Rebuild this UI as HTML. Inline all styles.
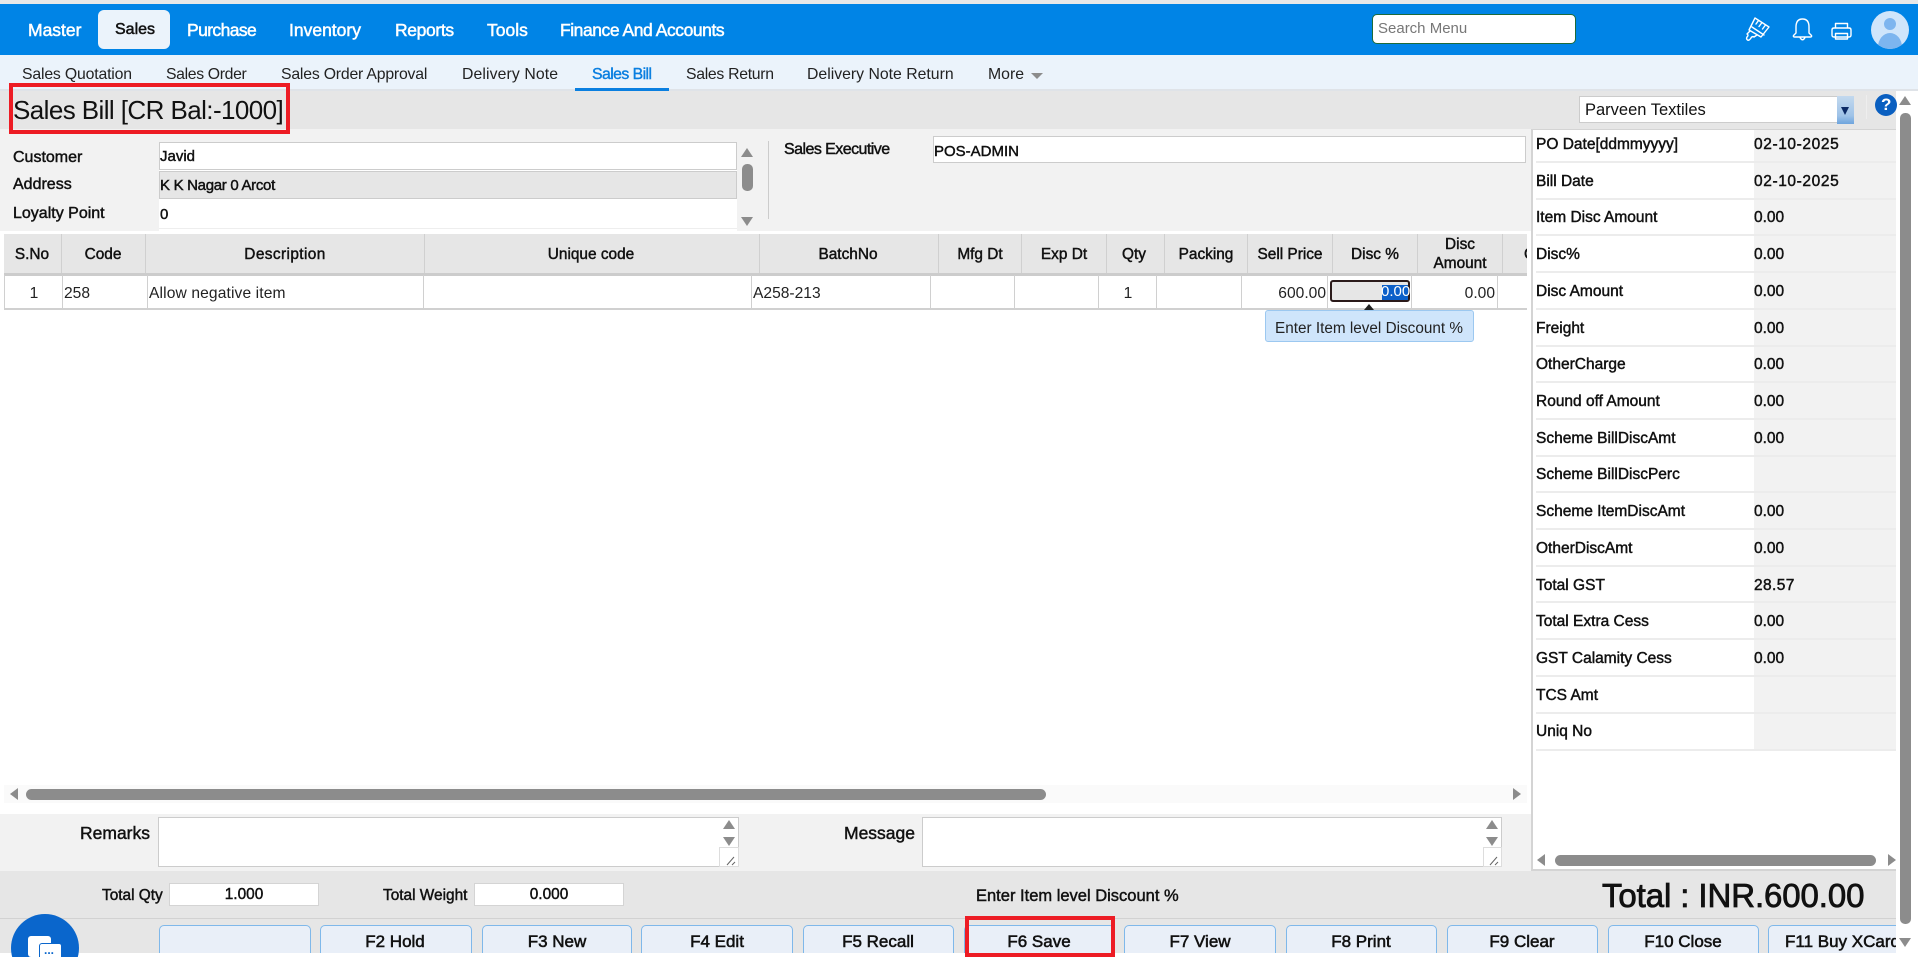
<!DOCTYPE html>
<html><head><meta charset="utf-8"><title>Sales Bill</title>
<style>
html,body{margin:0;padding:0;width:1918px;height:957px;overflow:hidden;background:#fff}
body{position:relative;font-family:"Liberation Sans",sans-serif;color:#111}
.b{position:absolute;box-sizing:border-box}
.t{position:absolute;white-space:nowrap;line-height:20px;font-size:16px}
.m{-webkit-text-stroke:.45px currentColor}
.c{transform:translateX(-50%)}
.r{transform:translateX(-100%)}
.n{color:#fff;font-size:17.5px;top:20px;-webkit-text-stroke:.5px #fff}
.s{font-size:15.8px;top:65px;color:#222}
.h{top:245px;font-size:15.4px;-webkit-text-stroke:.45px #111}
.d{top:284px;font-size:15.6px;color:#222}
.vh,.vr{position:absolute;width:1px;background:#d0d0d0}
.vh{top:234px;height:39px}.vr{top:275px;height:33px}
.l{left:1536px;font-size:15.5px;-webkit-text-stroke:.45px #111}
.v{left:1754px;font-size:15.5px;-webkit-text-stroke:.45px #111}
.rl{position:absolute;left:1536px;width:360px;height:2px;background:#ececec}
.btn{position:absolute;top:925px;height:40px;border:1px solid #7fb8ea;border-radius:5px 5px 0 0;background:#e9eff8;box-sizing:border-box}
.bt{top:932px;font-size:17px;-webkit-text-stroke:.55px #111}
.up,.dn,.lf,.rt{position:absolute;width:0;height:0}
.up{border-left:6px solid transparent;border-right:6px solid transparent;border-bottom:9px solid #8c8c8c}
.dn{border-left:6px solid transparent;border-right:6px solid transparent;border-top:9px solid #8c8c8c}
.lf{border-top:6px solid transparent;border-bottom:6px solid transparent;border-right:8px solid #8c8c8c}
.rt{border-top:6px solid transparent;border-bottom:6px solid transparent;border-left:8px solid #8c8c8c}
.red{position:absolute;box-sizing:border-box;border:4px solid #ed1c24}
</style></head><body>

<div class="b" style="left:0;top:0;width:1918px;height:4px;background:#e8e8e8"></div>
<div class="b" style="left:0;top:4px;width:1918px;height:51px;background:#0084e6"></div>
<div class="b" style="left:98px;top:10px;width:72px;height:39px;background:#ebf3fb;border-radius:6px"></div>
<span class="t n" style="left:28px">Master</span>
<span class="t n" style="left:115px;color:#111;-webkit-text-stroke:.5px #111;font-size:16px">Sales</span>
<span class="t n" style="left:187px;letter-spacing:-.6px">Purchase</span>
<span class="t n" style="left:289px">Inventory</span>
<span class="t n" style="left:395px;letter-spacing:-.35px">Reports</span>
<span class="t n" style="left:487px">Tools</span>
<span class="t n" style="left:560px;letter-spacing:-.45px">Finance And Accounts</span>

<div class="b" style="left:1372px;top:14px;width:204px;height:30px;background:#fff;border:1px solid #1d6b3a;border-radius:5px"></div>
<span class="t" style="left:1378px;top:19px;font-size:15px;color:#777">Search Menu</span>

<svg style="position:absolute;left:1740px;top:10px" width="120" height="40" fill="none" stroke="#fff" stroke-width="1.4" stroke-linejoin="round" stroke-linecap="round">
<path d="M15 8 L29 17 L21 27 L9 20 Z M18.5 10.5 L16 14 M22 12.5 L19 16.5 M25.5 15 L22.5 19 M12 17 L24 25"/>
<path d="M10 21 L7 24 Q9 25 7 27 Q6 29 7.5 30 Q9 31 11 28 Q12 26 14 27 L17 25"/>
<path d="M62.5 9 Q56 9 56 17 L56 23 L53.5 25.5 Q53 27 54.5 27 L70.5 27 Q72 27 71.5 25.5 L69 23 L69 17 Q69 9 62.5 9 Z M60 27.5 Q62.5 32 65 27.5"/>
<path d="M95.5 18 L95.5 13.5 L107.5 13.5 L107.5 18 M92 20 Q92 18 94 18 L109 18 Q111 18 111 20 L111 25 Q111 27 109 27 L94 27 Q92 27 92 25 Z M95.5 23.5 L107.5 23.5 L107.5 29 L95.5 29 Z"/>
</svg>
<div class="b" style="left:1871px;top:11px;width:38px;height:38px;border-radius:50%;background:#cfe5fb;overflow:hidden">
 <div class="b" style="left:13px;top:7px;width:12px;height:12px;border-radius:50%;background:#7db5ef"></div>
 <div class="b" style="left:7px;top:22px;width:24px;height:28px;border-radius:50%;background:#7db5ef"></div>
</div>

<div class="b" style="left:0;top:55px;width:1918px;height:34px;background:#ebf3fb"></div>
<div class="b" style="left:0;top:89px;width:1918px;height:2px;background:#dfe3e8"></div>
<span class="t s" style="left:22px;letter-spacing:-.17px">Sales Quotation</span>
<span class="t s" style="left:166px;letter-spacing:-.35px">Sales Order</span>
<span class="t s" style="left:281px;letter-spacing:-.2px">Sales Order Approval</span>
<span class="t s" style="left:462px;letter-spacing:.1px">Delivery Note</span>
<span class="t s m" style="left:592px;color:#0a7fe0;-webkit-text-stroke:.4px #0a7fe0;letter-spacing:-.55px">Sales Bill</span>
<div class="b" style="left:575px;top:88px;width:94px;height:3px;background:#0a7fe0"></div>
<span class="t s" style="left:686px;letter-spacing:-.3px">Sales Return</span>
<span class="t s" style="left:807px;">Delivery Note Return</span>
<span class="t s" style="left:988px">More</span>
<div class="b" style="left:1031px;top:73px;width:0;height:0;border-left:6px solid transparent;border-right:6px solid transparent;border-top:6px solid #8c8c8c"></div>

<div class="b" style="left:0;top:91px;width:1896px;height:38px;background:#e6e6e6"></div>
<span class="t" style="left:13px;top:100px;font-size:26px;letter-spacing:-.58px;color:#111">Sales Bill [CR Bal:-1000]</span>

<div class="b" style="left:1579px;top:96px;width:275px;height:27px;background:#fff;border:1px solid #ccc"></div>
<span class="t" style="left:1585px;top:100px;font-size:16.5px">Parveen Textiles</span>
<div class="b" style="left:1837px;top:96px;width:17px;height:28px;background:linear-gradient(#c3d9ee,#9fc3e8 70%,#6ea4dd)"></div>
<div class="b" style="left:1841px;top:107px;width:0;height:0;border-left:4.5px solid transparent;border-right:4.5px solid transparent;border-top:8px solid #0b2a66"></div>
<div class="b" style="left:1866px;top:95px;width:1px;height:24px;background:#eee"></div>
<div class="b" style="left:1875px;top:94px;width:22px;height:22px;border-radius:50%;background:#0a5fc0"></div>
<span class="t" style="left:1881px;top:95px;font-size:17px;font-weight:bold;color:#fff">?</span>

<div class="b" style="left:0;top:129px;width:1531px;height:102px;background:#f2f2f2"></div>
<span class="t m" style="left:13px;top:148px">Customer</span>
<span class="t m" style="left:13px;top:175px">Address</span>
<span class="t m" style="left:13px;top:204px">Loyalty Point</span>
<div class="b" style="left:159px;top:142px;width:578px;height:89px;background:#fff"></div>
<div class="b" style="left:159px;top:142px;width:578px;height:28px;background:#fff;border:1px solid #ccc"></div>
<div class="b" style="left:159px;top:171px;width:578px;height:28px;background:#e6e6e6;border:1px solid #ccc"></div>
<div class="b" style="left:159px;top:228px;width:578px;height:1px;background:#eee"></div>
<span class="t m" style="left:160px;top:147px;font-size:15px">Javid</span>
<span class="t m" style="left:160px;top:176px;font-size:15px;letter-spacing:-.3px">K K Nagar 0 Arcot</span>
<span class="t m" style="left:160px;top:205px;font-size:15px">0</span>
<div class="up" style="left:741px;top:148px"></div>
<div class="b" style="left:742px;top:164px;width:11px;height:27px;background:#8c8c8c;border-radius:5px"></div>
<div class="dn" style="left:741px;top:217px"></div>
<div class="b" style="left:768px;top:141px;width:1px;height:78px;background:#ccc"></div>
<span class="t m" style="left:784px;top:140px;letter-spacing:-.55px">Sales Executive</span>
<div class="b" style="left:933px;top:136px;width:593px;height:27px;background:#fff;border:1px solid #ccc"></div>
<span class="t m" style="left:934px;top:142px;font-size:15px">POS-ADMIN</span>

<div class="b" style="left:4px;top:234px;width:1523px;height:39px;background:#e6e6e6"></div>
<div class="b" style="left:4px;top:273px;width:1523px;height:3px;background:#ccc"></div>
<div class="vh" style="left:61px"></div><div class="vh" style="left:145px"></div><div class="vh" style="left:424px"></div><div class="vh" style="left:759px"></div><div class="vh" style="left:938px"></div><div class="vh" style="left:1021px"></div><div class="vh" style="left:1106px"></div><div class="vh" style="left:1164px"></div><div class="vh" style="left:1247px"></div><div class="vh" style="left:1332px"></div><div class="vh" style="left:1417px"></div><div class="vh" style="left:1502px"></div>
<span class="t h c" style="left:32px">S.No</span>
<span class="t h c" style="left:103px">Code</span>
<span class="t h c" style="left:285px;letter-spacing:.4px">Description</span>
<span class="t h c" style="left:591px">Unique code</span>
<span class="t h c" style="left:848px">BatchNo</span>
<span class="t h c" style="left:980px">Mfg Dt</span>
<span class="t h c" style="left:1064px">Exp Dt</span>
<span class="t h c" style="left:1134px">Qty</span>
<span class="t h c" style="left:1206px">Packing</span>
<span class="t h c" style="left:1290px">Sell Price</span>
<span class="t h c" style="left:1375px">Disc %</span>
<span class="t h c" style="left:1460px;top:235px">Disc</span>
<span class="t h c" style="left:1460px;top:254px">Amount</span>
<div class="b" style="left:1524px;top:245px;width:3px;height:20px;overflow:hidden"><span class="t h" style="left:0;top:0">C</span></div>

<div class="b" style="left:4px;top:308px;width:1523px;height:2px;background:#d0d0d0"></div>
<div class="vr" style="left:4px"></div><div class="vr" style="left:62px"></div><div class="vr" style="left:147px"></div><div class="vr" style="left:423px"></div><div class="vr" style="left:751px"></div><div class="vr" style="left:930px"></div><div class="vr" style="left:1014px"></div><div class="vr" style="left:1098px"></div><div class="vr" style="left:1156px"></div><div class="vr" style="left:1241px"></div><div class="vr" style="left:1327px"></div><div class="vr" style="left:1411px"></div><div class="vr" style="left:1497px"></div>
<span class="t d c" style="left:34px">1</span>
<span class="t d" style="left:64px">258</span>
<span class="t d" style="left:149px;letter-spacing:.12px">Allow negative item</span>
<span class="t d" style="left:753px">A258-213</span>
<span class="t d c" style="left:1128px">1</span>
<span class="t d r" style="left:1326px">600.00</span>
<div class="b" style="left:1330px;top:280px;width:80px;height:22px;background:#e6e6e6;border:2px solid #2a1a1a;border-radius:3px"></div>
<div class="b" style="left:1382px;top:285px;width:26px;height:15px;background:#0b5fc9"></div>
<span class="t d" style="left:1381px;color:#fff;top:282px;font-size:15px">0.00</span>
<span class="t d r" style="left:1495px">0.00</span>
<div class="b" style="left:1364px;top:304px;width:0;height:0;border-left:5px solid transparent;border-right:5px solid transparent;border-bottom:6px solid #222"></div>
<div class="b" style="left:1265px;top:310px;width:209px;height:32px;background:#cfe5fb;border:1px solid #9cc8f0;border-radius:3px"></div>
<span class="t c" style="left:1369px;top:319px;font-size:15.3px;color:#222">Enter Item level Discount %</span>

<div class="b" style="left:4px;top:785px;width:1523px;height:18px;background:#fafafa"></div>
<div class="lf" style="left:10px;top:788px"></div>
<div class="b" style="left:26px;top:789px;width:1020px;height:11px;background:#8c8c8c;border-radius:6px"></div>
<div class="rt" style="left:1513px;top:788px"></div>

<div class="b" style="left:1531px;top:129px;width:2px;height:742px;background:#d4d4d4"></div>
<div class="b" style="left:1531px;top:129px;width:365px;height:1px;background:#d4d4d4"></div>
<div class="b" style="left:1754px;top:130px;width:142px;height:620px;background:#f2f2f2"></div>
<div class="rl" style="top:161px"></div><div class="rl" style="top:198px"></div><div class="rl" style="top:234px"></div><div class="rl" style="top:271px"></div><div class="rl" style="top:308px"></div><div class="rl" style="top:345px"></div><div class="rl" style="top:381px"></div><div class="rl" style="top:418px"></div><div class="rl" style="top:455px"></div><div class="rl" style="top:491px"></div><div class="rl" style="top:528px"></div><div class="rl" style="top:565px"></div><div class="rl" style="top:601px"></div><div class="rl" style="top:638px"></div><div class="rl" style="top:675px"></div><div class="rl" style="top:712px"></div><div class="rl" style="top:749px"></div>
<span class="t l" style="top:135px">PO Date[ddmmyyyy]</span><span class="t v" style="top:135px;letter-spacing:.6px">02-10-2025</span>
<span class="t l" style="top:172px">Bill Date</span><span class="t v" style="top:172px;letter-spacing:.6px">02-10-2025</span>
<span class="t l" style="top:208px">Item Disc Amount</span><span class="t v" style="top:208px">0.00</span>
<span class="t l" style="top:245px">Disc%</span><span class="t v" style="top:245px">0.00</span>
<span class="t l" style="top:282px">Disc Amount</span><span class="t v" style="top:282px">0.00</span>
<span class="t l" style="top:319px">Freight</span><span class="t v" style="top:319px">0.00</span>
<span class="t l" style="top:355px">OtherCharge</span><span class="t v" style="top:355px">0.00</span>
<span class="t l" style="top:392px">Round off Amount</span><span class="t v" style="top:392px">0.00</span>
<span class="t l" style="top:429px">Scheme BillDiscAmt</span><span class="t v" style="top:429px">0.00</span>
<span class="t l" style="top:465px">Scheme BillDiscPerc</span>
<span class="t l" style="top:502px">Scheme ItemDiscAmt</span><span class="t v" style="top:502px">0.00</span>
<span class="t l" style="top:539px">OtherDiscAmt</span><span class="t v" style="top:539px">0.00</span>
<span class="t l" style="top:576px">Total GST</span><span class="t v" style="top:576px;letter-spacing:.4px">28.57</span>
<span class="t l" style="top:612px">Total Extra Cess</span><span class="t v" style="top:612px">0.00</span>
<span class="t l" style="top:649px">GST Calamity Cess</span><span class="t v" style="top:649px">0.00</span>
<span class="t l" style="top:686px">TCS Amt</span>
<span class="t l" style="top:722px">Uniq No</span>
<div class="lf" style="left:1537px;top:854px"></div>
<div class="b" style="left:1555px;top:855px;width:321px;height:11px;background:#8c8c8c;border-radius:6px"></div>
<div class="rt" style="left:1888px;top:854px"></div>
<div class="b" style="left:1531px;top:869px;width:365px;height:2px;background:#d4d4d4"></div>

<div class="up" style="left:1899px;top:96px"></div>
<div class="b" style="left:1900px;top:113px;width:11px;height:811px;background:#8c8c8c;border-radius:5px"></div>
<div class="dn" style="left:1899px;top:938px"></div>

<div class="b" style="left:0;top:814px;width:1531px;height:57px;background:#f2f2f2"></div>
<span class="t m" style="left:80px;top:823px;font-size:17.5px">Remarks</span>
<div class="b" style="left:158px;top:817px;width:581px;height:50px;background:#fff;border:1px solid #ccc"></div>
<div class="up" style="left:723px;top:820px"></div><div class="dn" style="left:723px;top:837px"></div>
<div class="b" style="left:719px;top:847px;width:20px;height:20px;background:#fff;border:1px solid #ddd"></div>
<svg style="position:absolute;left:726px;top:856px" width="12" height="10" stroke="#666" fill="none"><path d="M1 9 L8 1 M6 9 L9 6"/></svg>
<span class="t m" style="left:844px;top:823px;font-size:17.5px">Message</span>
<div class="b" style="left:922px;top:817px;width:580px;height:50px;background:#fff;border:1px solid #ccc"></div>
<div class="up" style="left:1486px;top:820px"></div><div class="dn" style="left:1486px;top:837px"></div>
<div class="b" style="left:1483px;top:847px;width:19px;height:20px;background:#fff;border:1px solid #ddd"></div>
<svg style="position:absolute;left:1489px;top:856px" width="12" height="10" stroke="#666" fill="none"><path d="M1 9 L8 1 M6 9 L9 6"/></svg>

<div class="b" style="left:0;top:871px;width:1896px;height:82px;background:#e6e6e6"></div>
<div class="b" style="left:0;top:918px;width:1896px;height:1px;background:#d2d2d2"></div>
<span class="t m" style="left:102px;top:886px;font-size:15.4px">Total Qty</span>
<div class="b" style="left:169px;top:883px;width:150px;height:23px;background:#fff;border:1px solid #d4d4d4"></div>
<span class="t m c" style="left:244px;top:885px;font-size:15.4px">1.000</span>
<span class="t m" style="left:383px;top:886px;font-size:15.4px">Total Weight</span>
<div class="b" style="left:474px;top:883px;width:150px;height:23px;background:#fff;border:1px solid #d4d4d4"></div>
<span class="t m c" style="left:549px;top:885px;font-size:15.4px">0.000</span>
<span class="t m" style="left:976px;top:886px;font-size:16.5px">Enter Item level Discount %</span>
<span class="t" style="left:1602px;top:886px;font-size:33px;letter-spacing:-.1px;-webkit-text-stroke:.8px #111">Total : INR.600.00</span>

<div class="b" style="left:0;top:919px;width:1896px;height:34px;overflow:hidden">
 <div class="btn" style="left:159px;top:6px;width:152px"></div>
 <div class="btn" style="left:320px;top:6px;width:152px"></div>
 <div class="btn" style="left:482px;top:6px;width:150px"></div>
 <div class="btn" style="left:641px;top:6px;width:152px"></div>
 <div class="btn" style="left:803px;top:6px;width:151px"></div>
 <div class="btn" style="left:964px;top:6px;width:151px"></div>
 <div class="btn" style="left:1124px;top:6px;width:152px"></div>
 <div class="btn" style="left:1286px;top:6px;width:151px"></div>
 <div class="btn" style="left:1447px;top:6px;width:151px"></div>
 <div class="btn" style="left:1608px;top:6px;width:151px"></div>
 <div class="btn" style="left:1768px;top:6px;width:151px"></div>
 <span class="t bt c" style="left:395px;top:13px">F2 Hold</span>
 <span class="t bt c" style="left:557px;top:13px">F3 New</span>
 <span class="t bt c" style="left:717px;top:13px">F4 Edit</span>
 <span class="t bt c" style="left:878px;top:13px">F5 Recall</span>
 <span class="t bt c" style="left:1039px;top:13px">F6 Save</span>
 <span class="t bt c" style="left:1200px;top:13px">F7 View</span>
 <span class="t bt c" style="left:1361px;top:13px">F8 Print</span>
 <span class="t bt c" style="left:1522px;top:13px">F9 Clear</span>
 <span class="t bt c" style="left:1683px;top:13px">F10 Close</span>
 <span class="t bt" style="left:1785px;top:13px">F11 Buy XCard</span>
</div>
<div class="red" style="left:965px;top:916px;width:150px;height:41px"></div>
<div class="red" style="left:9px;top:83px;width:281px;height:51px"></div>

<div class="b" style="left:11px;top:914px;width:68px;height:43px;overflow:hidden">
 <div class="b" style="left:0;top:0;width:68px;height:68px;border-radius:50%;background:#0a66cc"></div>
 <div class="b" style="left:17px;top:22px;width:23px;height:21px;background:#fff;border-radius:3px"></div>
 <div class="b" style="left:28px;top:29px;width:23px;height:20px;background:#fff;border:1px solid #0a66cc;border-radius:3px"></div>
 <span class="t" style="left:33px;top:26px;font-size:12px;font-weight:bold;color:#0a66cc">...</span>
</div>
</body></html>
